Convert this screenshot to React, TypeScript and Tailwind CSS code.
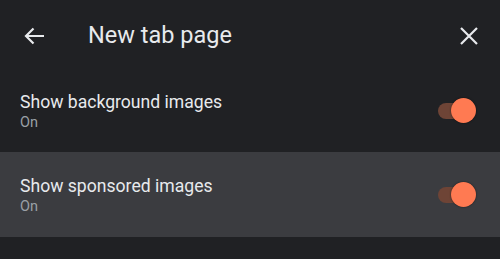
import React from 'react'

function Toggle() {
    return (
        <div className="relative w-[40px] h-[26px] flex items-center">
            <div className="ml-[2px] w-[34px] h-[16px] rounded-full bg-[#6e4436]" />
            <div className="absolute right-0 top-0 w-[25px] h-[25px] rounded-full bg-[#ff7a52] shadow-[0_0_2px_rgba(0,0,0,0.6)]" />
        </div>
    )
}

function Row({ title, sub, active, h }: { title: string, sub: string, active?: boolean, h: string }) {
    return (
        <div className={`${h} flex flex-row items-center justify-between pl-[20px] pr-[24px] ${active ? 'bg-[#3b3c40]' : ''}`}>
            <div className="flex flex-col pt-[2px]">
                <span className="text-[17.6px] leading-[22px] text-[#e8eaed]">{title}</span>
                <span className="text-[14.5px] leading-[20px] text-[#9aa0a6]">{sub}</span>
            </div>
            <Toggle />
        </div>
    )
}

export default function App() {
    return (
        <div className="w-[500px] h-[259px] bg-[#202124] overflow-hidden" style={{ fontFamily: 'Roboto, "Noto Sans", sans-serif' }}>
            <div className="h-[70px] flex flex-row items-center pl-[24px] pr-[22px] pt-[1px]">
                <svg width="21" height="18" viewBox="0 0 21 18" className="text-[#e8eaed]" fill="none" stroke="currentColor" strokeWidth="2.2">
                    <path d="M20 9H2.5M9.5 1.5L2 9l7.5 7.5" />
                </svg>
                <span className="ml-[43px] text-[23.5px] text-[#e8eaed] leading-none">New tab page</span>
                <div className="flex-1" />
                <svg width="18" height="18" viewBox="0 0 18 18" className="text-[#e8eaed]" fill="none" stroke="currentColor" strokeWidth="2.2">
                    <path d="M1 1l16 16M17 1L1 17" />
                </svg>
            </div>
            <Row h="h-[82px]" title="Show background images" sub="On" />
            <Row h="h-[85px]" title="Show sponsored images" sub="On" active />
        </div>
    )
}
